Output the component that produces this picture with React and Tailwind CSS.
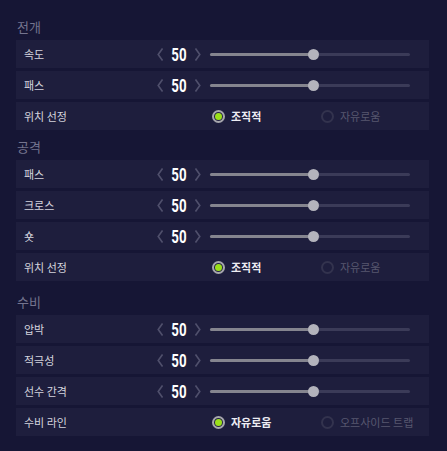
import React from 'react';

const SECTIONS = [
  {
    title: '전개',
    mt: 'mt-0',
    rows: [
      { type: 'slider', label: '속도', value: 50 },
      { type: 'slider', label: '패스', value: 50 },
      { type: 'radio', label: '위치 선정', options: ['조직적', '자유로움'], selected: 0 },
    ],
  },
  {
    title: '공격',
    mt: 'mt-[7px]',
    rows: [
      { type: 'slider', label: '패스', value: 50 },
      { type: 'slider', label: '크로스', value: 50 },
      { type: 'slider', label: '숏', value: 50 },
      { type: 'radio', label: '위치 선정', options: ['조직적', '자유로움'], selected: 0 },
    ],
  },
  {
    title: '수비',
    mt: 'mt-[11px]',
    rows: [
      { type: 'slider', label: '압박', value: 50 },
      { type: 'slider', label: '적극성', value: 50 },
      { type: 'slider', label: '선수 간격', value: 50 },
      { type: 'radio', label: '수비 라인', options: ['자유로움', '오프사이드 트랩'], selected: 0 },
    ],
  },
];

const KR = { fontFamily: '"Noto Sans CJK KR", "Noto Sans", sans-serif' };

function Chevron({ dir }) {
  const d = dir === 'left' ? 'M5.5 0.5 L1.2 6.5 L5.5 12.5' : 'M0.5 0.5 L4.8 6.5 L0.5 12.5';
  return (
    <svg width="6" height="13" viewBox="0 0 6 13" className="shrink-0">
      <path d={d} fill="none" stroke="#50506c" strokeWidth="1.6" />
    </svg>
  );
}

function Stepper({ value }) {
  return (
    <div className="flex w-[46px] items-center justify-between pl-[2px]">
      <Chevron dir="left" />
      <span
        className="inline-block scale-x-[0.7] text-[19px] leading-none font-bold text-white"
        style={{ fontFamily: 'Roboto, "DejaVu Sans", sans-serif' }}
      >
        {value}
      </span>
      <Chevron dir="right" />
    </div>
  );
}

function Slider({ value }) {
  // track 200px, thumb sits at value percent
  const pos = (value / 100) * 200 + 3;
  return (
    <div className="relative ml-[9px] h-[12px] w-[200px]">
      <div className="absolute top-[5px] left-0 h-[3px] w-full rounded-full bg-[#3b3b58]" />
      <div className="absolute top-[5px] left-0 h-[3px] rounded-full bg-[#85858f]" style={{ width: pos }} />
      <div
        className="absolute top-[1px] h-[11px] w-[11px] rounded-full bg-[#b3b3bc]"
        style={{ left: pos - 5.5 }}
      />
    </div>
  );
}

function Radio({ label, active }) {
  return (
    <div className="flex w-[109px] items-center">
      {active ? (
        <span className="flex h-[13px] w-[13px] items-center justify-center rounded-full border-2 border-[#a7a7ad] bg-[#23233f]">
          <span className="h-[7px] w-[7px] rounded-full bg-[#9be01a]" />
        </span>
      ) : (
        <span className="h-[13px] w-[13px] rounded-full border-2 border-[#33334e]" />
      )}
      <span
        className={`ml-[6px] text-[11px] leading-none ${active ? 'font-bold text-[#ececf2]' : 'text-[#57576f]'}`}
        style={KR}
      >
        {label}
      </span>
    </div>
  );
}

function Row({ row }) {
  return (
    <div className="flex h-[28px] items-center bg-[#1e1e3d] pl-2">
      <span className="w-[131px] shrink-0 text-[11px] leading-none text-[#d4d4de]" style={KR}>
        {row.label}
      </span>
      {row.type === 'slider' ? (
        <div className="flex items-center">
          <Stepper value={row.value} />
          <Slider value={row.value} />
        </div>
      ) : (
        <div className="ml-[57px] flex items-center">
          {row.options.map((o, i) => (
            <Radio key={o} label={o} active={i === row.selected} />
          ))}
        </div>
      )}
    </div>
  );
}

export default function App() {
  return (
    <div className="h-[451px] w-[447px] bg-[#161635] pt-[17px] pr-[18px] pl-[16px]">
      {SECTIONS.map((s) => (
        <div key={s.title} className={s.mt}>
          <div className="flex h-[20px] items-center pl-px text-[13px] text-[#74748e]" style={KR}>
            {s.title}
          </div>
          <div className="mt-[3px] flex flex-col gap-[3px]">
            {s.rows.map((r, i) => (
              <Row key={i} row={r} />
            ))}
          </div>
        </div>
      ))}
    </div>
  );
}
